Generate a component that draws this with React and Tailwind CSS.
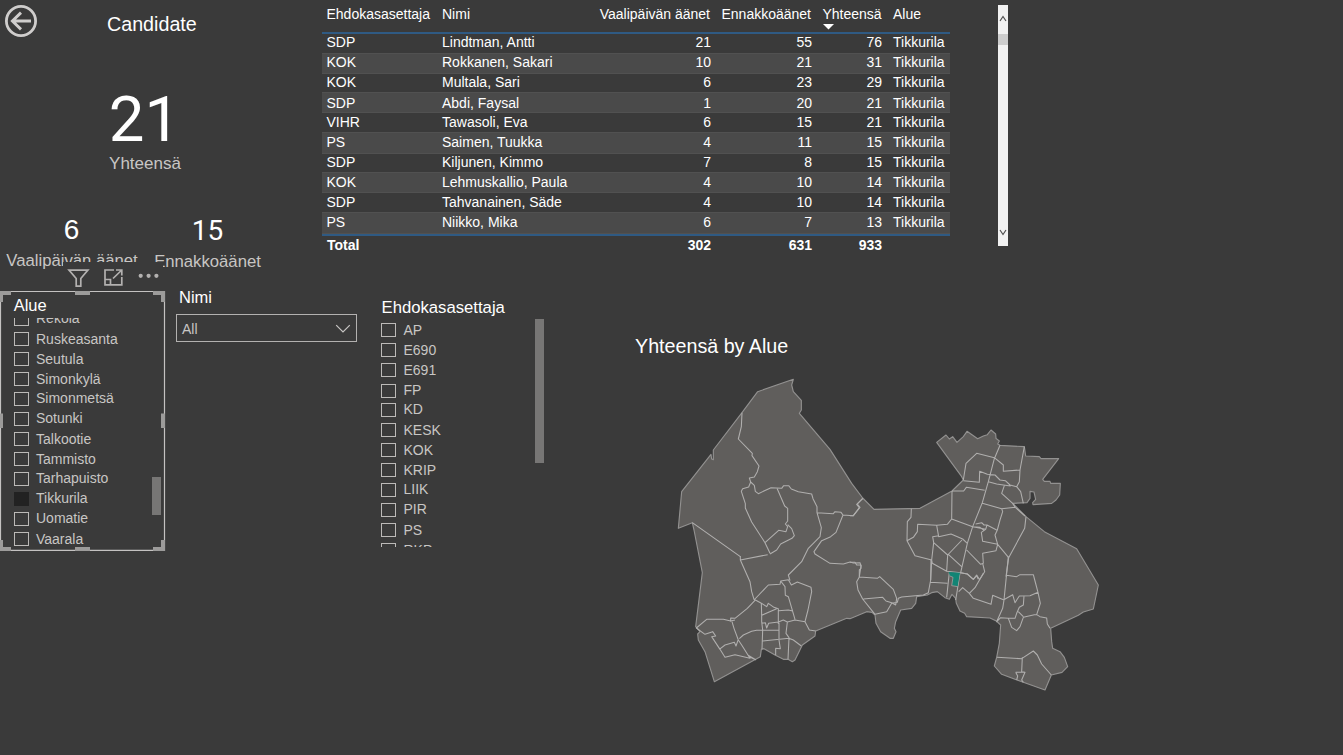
import React from "react";

const tableRows = [
  ["SDP", "Lindtman, Antti", 21, 55, 76, "h-[19px] pt-0"],
  ["KOK", "Rokkanen, Sakari", 10, 21, 31, "h-[21px] pt-px"],
  ["KOK", "Multala, Sari", 6, 23, 29, "h-[18px] pt-0"],
  ["SDP", "Abdi, Faysal", 1, 20, 21, "h-[21px] pt-[3px]"],
  ["VIHR", "Tawasoli, Eva", 6, 15, 21, "h-[19px] pt-px"],
  ["PS", "Saimen, Tuukka", 4, 11, 15, "h-[22px] pt-[2px]"],
  ["SDP", "Kiljunen, Kimmo", 7, 8, 15, "h-[18px] pt-0"],
  ["KOK", "Lehmuskallio, Paula", 4, 10, 14, "h-[21px] pt-[2px]"],
  ["SDP", "Tahvanainen, Säde", 4, 10, 14, "h-[19px] pt-px"],
  ["PS", "Niikko, Mika", 6, 7, 13, "h-[22px] pt-[2px]"],
];

const areas = [
  ["Rekola", true],
  ["Ruskeasanta"],
  ["Seutula"],
  ["Simonkylä"],
  ["Simonmetsä", true],
  ["Sotunki", true],
  ["Talkootie"],
  ["Tammisto"],
  ["Tarhapuisto", true],
  ["Tikkurila", true],
  ["Uomatie", true],
  ["Vaarala"],
];

const parties = [
  ["AP"],
  ["E690"],
  ["E691"],
  ["FP", false, true],
  ["KD", true],
  ["KESK"],
  ["KOK"],
  ["KRIP"],
  ["LIIK", true],
  ["PIR", true],
  ["PS"],
  ["RKP"],
];

const cols = "grid grid-cols-[115px_157px_122px_101px_71px_62px]";

function BackButton() {
  return (
    <svg className="h-[42px] w-[42px] shrink-0" viewBox="0 0 42 42" fill="none" stroke="#cfcdcc">
      <circle cx="21" cy="21" r="14.6" strokeWidth="2.8" />
      <path d="M31 21H12.5M21 12.6L12.4 21L21 29.4" strokeWidth="2.9" />
    </svg>
  );
}

function Cards() {
  return (
    <aside className="flex h-[291px] w-[322px] shrink-0 flex-col">
      <div className="flex h-[42px]">
        <BackButton />
        <h1 className="ml-[65px] mt-[12px] text-[19.7px] leading-6 text-white">Candidate</h1>
      </div>
      <div className="ml-[45px] mt-[43px] flex w-[200px] flex-col items-center">
        <span className="-ml-px font-['Roboto','Liberation_Sans',sans-serif] text-[63.5px] leading-[69px] text-white">21</span>
        <span className="text-[17px] leading-5 text-[#c8c6c4]">Yhteensä</span>
      </div>
      <div className="mt-[40px] flex">
        <div className="flex w-[144px] flex-col items-center">
          <span className="-ml-px text-[28px] leading-8 text-white">6</span>
          <span className="mt-[5px] text-[16.7px] leading-5 text-[#c8c6c4]">Vaalipäivän äänet</span>
        </div>
        <div className="mt-px flex w-[127px] flex-col items-center">
          <span className="font-['Roboto','Liberation_Sans',sans-serif] text-[28px] leading-8 text-white">15</span>
          <span className="mt-[5px] text-[16.7px] leading-5 text-[#c8c6c4]">Ennakkoäänet</span>
        </div>
      </div>
    </aside>
  );
}

function ResultsTable() {
  return (
    <div className="w-[628px] shrink-0 text-[14px] leading-4 text-white">
      <div className={`${cols} h-[34px] border-b-2 border-[#2f5a83] pt-[6px]`}>
        <span className="pl-[4.5px]">Ehdokasasettaja</span>
        <span className="pl-[5px]">Nimi</span>
        <span className="flex justify-end whitespace-nowrap pr-[6px]">Vaalipäivän äänet</span>
        <span className="pr-[6px] text-right">Ennakkoäänet</span>
        <span className="flex flex-col pl-[5.5px]">
          Yhteensä
          <svg className="mt-[2px] h-[6px] w-[11px]" viewBox="0 0 11 6">
            <path d="M0 0h11L5.500 5.500z" fill="#fff" />
          </svg>
        </span>
        <span className="pl-[5px]">Alue</span>
      </div>
      {tableRows.map((r, i) => (
        <div
          key={r[1]}
          className={`${cols} ${r[5]} ${i % 2 ? "border-y border-[#515151] bg-[#4a4a4a] [&>span]:-mt-px" : ""}`}
        >
          <span className="pl-[4.5px]">{r[0]}</span>
          <span className="pl-[5px]">{r[1]}</span>
          <span className="pr-[5px] text-right">{r[2]}</span>
          <span className="pr-[5px] text-right">{r[3]}</span>
          <span className="pr-[6px] text-right">{r[4]}</span>
          <span className="pl-[5px]">Tikkurila</span>
        </div>
      ))}
      <div className={`${cols} border-t-2 border-[#2f5a83] pt-px font-bold`}>
        <span className="pl-[5px]">Total</span>
        <span />
        <span className="pr-[5px] text-right">302</span>
        <span className="pr-[5px] text-right">631</span>
        <span className="pr-[6px] text-right">933</span>
        <span />
      </div>
    </div>
  );
}

function TableScrollbar() {
  return (
    <div className="ml-[48px] mt-[5px] flex h-[241px] w-[10px] flex-col items-center bg-[#f1f1f1]">
      <svg className="mt-[10px] h-[7px] w-[8px]" viewBox="0 0 8 7" fill="none" stroke="#505050" strokeWidth="1.2">
        <path d="M1 6L4 1.500L7 6" />
      </svg>
      <div className="mt-[12px] h-[11px] w-full bg-[#cdcdcd]" />
      <svg className="mb-[10px] mt-auto h-[7px] w-[8px]" viewBox="0 0 8 7" fill="none" stroke="#505050" strokeWidth="1.2">
        <path d="M1 1L4 5.500L7 1" />
      </svg>
    </div>
  );
}

function CheckItem({ label, up, boxDown, checked }) {
  return (
    <li className="flex h-5 items-start">
      <span
        className={`${checked ? "bg-[#222222]" : "border border-[#bcbab8]"} ${boxDown ? "mt-[4px]" : "mt-[3px]"} h-[14px] w-[15px] shrink-0`}
      />
      <span className={`ml-[7.5px] leading-4 ${up ? "mt-px" : "mt-[2px]"}`}>{label}</span>
    </li>
  );
}

function SelectionFrame() {
  return (
    <svg className="absolute left-0 top-0 h-[260px] w-[166px]" viewBox="0 0 166 260" fill="none">
      <path d="M0.500 0.500H164.500V259.300H0.500Z" stroke="#c4c2c1" strokeWidth="1.2" />
      <path
        d="M0 0H11V4H3V11H0ZM75 0H90V4H75ZM153 0H165V11H161V4H153ZM0 122.500H3V137H0ZM161 122.500H165V137H161ZM0 249H3V256H11V260H0ZM75 256H90V260H75ZM161 249H165V260H153V256H161Z"
        fill="#9c9b9a"
      />
    </svg>
  );
}

function VisualToolbar() {
  return (
    <div className="absolute left-[63px] top-[-29px] h-[29px] w-[100px] bg-[#3a3a3a]">
      <svg className="h-[29px] w-[100px]" viewBox="0 0 100 29" fill="none" stroke="#b3b1b0" strokeWidth="1.7">
        <path d="M6 8.100H24.900L17.800 16.500V24.200H13.200V16.500Z" />
        <path d="M51 8H42V22.800H58.800V15M42 17.500H47.500V22.800M53 8H58.800V13.500M58.800 8L50 16.500" />
        <g fill="#b3b1b0" stroke="none">
          <circle cx="77.700" cy="13.800" r="2.100" />
          <circle cx="85.600" cy="13.800" r="2.100" />
          <circle cx="93.400" cy="13.800" r="2.100" />
        </g>
      </svg>
    </div>
  );
}

function AreaSlicer() {
  return (
    <section className="relative h-[260px] w-[165px] shrink-0">
      <VisualToolbar />
      <SelectionFrame />
      <div className="flex h-full flex-col pl-[13px]">
        <h2 className="ml-[0.7px] mt-[4px] text-[16.5px] leading-5 text-white">Alue</h2>
        <div className="mt-[3px] flex h-[229px] overflow-hidden">
          <ul className="-mt-[9px] w-[139px] pl-[0.5px] text-[14px] text-[#c8c6c4]">
            {areas.map(([label, up]) => (
              <CheckItem key={label} label={label} up={up} checked={label === "Tikkurila"} />
            ))}
          </ul>
          <div className="mt-[159px] h-[38px] w-[9px] bg-[#777675]" />
        </div>
      </div>
    </section>
  );
}

function NameSlicer() {
  return (
    <section className="ml-[11px] w-[181px] shrink-0">
      <h2 className="ml-[3px] mt-[-4px] text-[16.5px] leading-5 text-white">Nimi</h2>
      <div className="mt-[7px] flex h-[28px] items-center justify-between border border-[#b3b1b0] pl-[5px] pr-[5px] text-[14px] text-[#c8c6c4]">
        <span className="mt-px leading-4">All</span>
        <svg className="mt-[2px] h-[10px] w-[16px]" viewBox="0 0 16 10" fill="none" stroke="#c8c6c4" strokeWidth="1.2">
          <path d="M1.200 1.200L8 8L14.800 1.200" />
        </svg>
      </div>
    </section>
  );
}

function PartySlicer() {
  return (
    <section className="ml-[24px] w-[163px] shrink-0">
      <h2 className="ml-[0.5px] mt-[7px] text-[16.7px] leading-5 text-white">Ehdokasasettaja</h2>
      <div className="mt-px flex h-[228px] overflow-hidden">
        <ul className="mt-px w-[154px] text-[14px] text-[#c8c6c4]">
          {parties.map(([label, up, boxDown]) => (
            <CheckItem key={label} label={label} up={up} boxDown={boxDown} />
          ))}
        </ul>
        <div className="h-[144px] w-[9px] bg-[#777675]" />
      </div>
    </section>
  );
}

function AreaMap() {
  return (
    <svg className="h-[340px] w-[450px]" viewBox="0 0 1350 1020" fill="none" strokeLinejoin="round">
      <path
        fill="#605e5c"
        stroke="#929190"
        strokeWidth="3.400"
        d="M400 58L395 75L400 95L424 121V150L418 160L510 268L575 370L608 414L642 448L780 445L876 393L910 360L905 350L830 247L858 225L868 237L878 230L891 247L910 230L921 214L953 236L970 228L982 224L993 210L1007 222L1008 235L1018 243L1013 252L1020 256L1093 260L1097 288L1138 290L1143 296H1196L1148 358L1153 364H1170L1172 370H1201L1199 405L1188 420L1175 430L1119 434L1118 428L1127 418L1122 396L1110 394V415L1101 428L1058 430L1098 470L1153 515L1250 566L1315 675L1300 747L1270 756L1255 766L1172 805L1175 845L1178 865L1200 875L1213 892L1223 920L1206 937L1174 945L1155 990L1090 967L1025 943L1003 918L1010 892L1018 850L1022 795L1009 783L990 774L920 770L914 760L900 753L889 730L887 715L876 703L868 718L855 713L832 695L815 698L802 705L770 710L767 730L755 745L722 750L707 785L703 805L708 815L700 835H690L662 815L648 790L645 765L636 757L620 755L570 776L560 775L467 813L465 828L427 855L405 900L397 905L384 898H370L345 885L312 866L304 868L301 890L163 965L135 875L115 840L113 822L120 815L107 800L127 638L102 510L97 488L55 505L65 395L153 283L155 297L160 299V270L246 158L293 95Z"
      />
      <g stroke="#b0afae" strokeWidth="3.200">
        {/* north-west districts */}
        <path d="M246 158L244 200L235 237L277 280L276 287L297 318L292 335L283 351L268 354L272 366L266 381L248 386L244 394L256 431V444L275 486L315 548L330 580M272 366L283 376L286 394L295 401L333 383L365 385L371 377L386 377L394 387L415 395L455 402L459 416L471 440V458L484 503L480 530L460 550L445 565L425 605L385 645L390 662M351 385L374 438L383 445V483L376 492L383 500L378 515L356 511L315 548M383 494L395 506L403 527L396 535L362 552L350 570L330 582M471 458L520 461L525 455L543 457L549 465L580 467L598 443L590 433L608 416M549 465L528 517L512 530L485 542L462 575L465 582L510 610L550 612L570 606L580 609L600 608L603 618L598 650M97 488L241 590" />
        {/* south-west districts */}
        <g transform="translate(0 510)">
          <path d="M241 78V90L323 74M241 90L270 155L275 185L282 208L304 220L305 255V275L308 300L306 358M282 210L325 165L360 163L362 153L385 149L394 165L412 156L453 172L455 185L444 240L435 275M362 153L375 170L376 196L385 200L405 268M285 211L262 235L225 265L212 264V275M225 270L212 273L190 268H140L109 294L135 313L158 305L167 318L155 320L180 358L195 382L225 374L270 385L245 345L235 330L222 295L216 275M235 328L228 348L223 337L195 345L178 358M238 326L250 315L275 304L290 301H357M305 220L320 230L325 220L342 232L355 236L355 282M305 256L350 236M356 242L385 240L398 243M305 280L316 278L320 294L326 280L355 276L370 270L382 276L405 270L435 275L448 300L467 303M382 276L378 310L387 323L384 388M357 278V330L361 356L347 355V375M308 333L387 325L400 330L424 348M268 380L287 389L262 374" />
        </g>
        {/* north-east districts */}
        <g transform="translate(570 180)">
          <path d="M450 76L433 116L415 185L397 248L368 320L352 370L332 458M340 180L348 130L380 100L433 113L460 135V154L510 150M523 80L510 150L508 185L500 200M340 182L388 187L389 154L412 163L435 165L450 180L466 182L480 195L500 200L512 215L520 250M415 185L440 192L460 195L482 198M306 213H341L349 202L404 211M463 197L455 220L488 250L496 262L525 288M306 213L305 297L368 320L407 328L411 315L440 330M305 297L292 313L260 316L203 313L202 335L190 352L171 362M184 266L183 292L172 305L171 362L195 407L245 420L247 430L290 454L332 458M397 250L455 266L496 262M455 266L458 275L450 300L442 330L435 345L443 373L398 364L394 337L407 328M528 290L524 325L476 413L468 470M260 316L266 350L303 342L338 357L352 370M266 347L248 350L251 368L293 405L336 360M251 368L245 420L242 480M293 405L290 454M295 403L335 440M350 390L392 433L400 430L398 400L438 392L443 373L476 413M377 312L395 308L402 315L411 315M368 320L390 322L403 332M398 430L404 455L388 480M332 458L352 462L370 478L380 465L388 478M0 287H10L30 262L22 252L38 235" />
        </g>
        {/* south-east districts */}
        <g transform="translate(570 540)">
          <path d="M0 67H15L20 75H33V85L28 90V111L20 125L24 150L38 177L75 223M28 111L82 115L89 110L130 148L140 175L137 195L125 188L108 183L98 172L40 177M75 223L110 215L125 190L142 187L145 175L155 171L220 165L235 158L242 120L243 60M242 127L292 130M298 97L290 172M330 98L322 150L317 180M332 98L352 102L370 118L380 107L385 118M326 155L338 143L358 160M400 100L375 143L358 160L370 175L423 193L428 166L462 180L475 50M462 180L458 205L440 245L452 233L475 235L485 262L500 272L510 260L520 232L553 224L560 224L570 230L590 234L592 252L600 265M469 106L500 110L510 104H550L555 123L564 157L571 190L560 224M460 180L488 164L495 188L508 168L540 167L564 157M522 168L520 195L508 202L500 220L495 235L475 235M505 215L520 230M441 352L515 356L550 333L562 345L575 372L604 405M517 352L515 395L525 397L515 420L520 427M497 397H525M497 397L503 408L500 420" />
        </g>
      </g>
      {/* selected district */}
      <path fill="#128474" d="M866 636L900 638L893 679L876 676L879 652L870 648Z" />
      <path d="M870 648L879 652L875 677L893 680" stroke="#b0afae" strokeWidth="2" />
    </svg>
  );
}

export default function App() {
  return (
    <main className="flex h-[755px] w-[1343px] flex-col overflow-hidden bg-[#3a3a3a] font-['Liberation_Sans',Arial,sans-serif]">
      <div className="flex h-[291px] shrink-0">
        <Cards />
        <ResultsTable />
        <TableScrollbar />
      </div>
      <div className="flex items-start">
        <AreaSlicer />
        <NameSlicer />
        <PartySlicer />
        <section className="ml-[91px] mt-[43px] flex flex-col">
          <h2 className="text-[19.7px] leading-6 text-white">Yhteensä by Alue</h2>
          <div className="ml-[25px] mt-[2px]">
            <AreaMap />
          </div>
        </section>
      </div>
    </main>
  );
}
